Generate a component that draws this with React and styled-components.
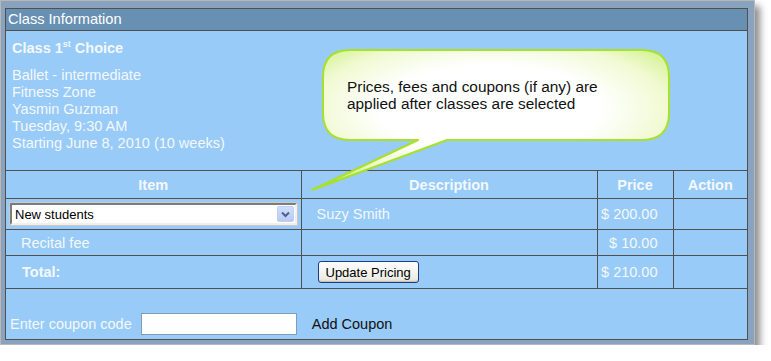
import React from "react";
import styled, { createGlobalStyle } from "styled-components";

const GlobalStyle = createGlobalStyle`
  body {
    margin: 0;
    background: #ffffff;
    font-family: "Liberation Sans", Arial, sans-serif;
  }
`;

const lineColor = "#505050";
const lightText = "#f4f8fc";

const Frame = styled.div`
  width: 755px;
  height: 345px;
  box-sizing: border-box;
  border: 1px solid #b8b8b8;
  background: #89a3be;
  padding: 7px 6px 4px 4px;
  box-shadow: 5px 6px 7px rgba(0, 0, 0, 0.45);
`;

const Panel = styled.div`
  position: relative;
  height: 100%;
  box-sizing: border-box;
  border: 1px solid ${lineColor};
  background: #98cbf8;
  display: flex;
  flex-direction: column;
`;

const Header = styled.div`
  height: 21px;
  line-height: 21px;
  border-bottom: 1px solid ${lineColor};
  background: #6890b2;
  color: #ffffff;
  font-size: 14.6px;
  padding-left: 2px;
`;

const Info = styled.div`
  height: 139px;
  box-sizing: border-box;
  padding: 9px 6px 0;
  color: ${lightText};
  font-size: 14.5px;
  line-height: 17px;
`;

const Title = styled.div`
  font-weight: bold;
  margin-bottom: 10px;

  sup {
    font-size: 9px;
    line-height: 0;
    vertical-align: 6px;
  }
`;

const Table = styled.table`
  width: 100%;
  border-collapse: collapse;
  font-size: 14.5px;
  color: ${lightText};

  th,
  td {
    border: 1px solid ${lineColor};
    padding: 0;
  }
  tr > :first-child {
    border-left: none;
  }
  tr > :last-child {
    border-right: none;
  }
`;

const HeadCell = styled.th`
  height: 27px;
  font-weight: bold;
  text-align: center;
`;

const Cell = styled.td`
  height: ${(p) => p.$h || 26}px;
  text-align: ${(p) => (p.$right ? "right" : "left")};
  padding: 0 ${(p) => (p.$right ? "15px" : "0")} 0 ${(p) => p.$pl || 0}px !important;
  font-weight: ${(p) => (p.$bold ? "bold" : "normal")};
`;

const SelectBox = styled.div`
  margin-left: 4px;
  width: 287px;
  height: 22px;
  box-sizing: border-box;
  outline: 1px solid #c9c9c9;
  display: flex;
  align-items: center;
  background: #ffffff;
  border-top: 2px solid #7c7c7c;
  border-left: 2px solid #7c7c7c;
  border-right: 2px solid #f0f0f0;
  border-bottom: 2px solid #f0f0f0;
`;

const SelectText = styled.span`
  flex: 1;
  padding-left: 3px;
  color: #000000;
  font-size: 13px;
`;

const ArrowButton = styled.span`
  width: 15px;
  height: 14px;
  margin-right: 1px;
  display: flex;
  align-items: center;
  justify-content: center;
  background: linear-gradient(#d1defc, #b7caf5);
  border: 1px solid #bccff7;
  border-radius: 2px;
`;

const Button = styled.button`
  margin-left: 16px;
  height: 22px;
  padding: 0 7px;
  font-family: "Liberation Sans", Arial, sans-serif;
  font-size: 13px;
  color: #000000;
  border: 1px solid #1c3c80;
  border-radius: 3px;
  background: linear-gradient(#ffffff, #ecebe4 85%, #d8d3c4);
  box-shadow: inset 0 -1px 0 #c8c2b2;
`;

const CouponRow = styled.div`
  display: flex;
  align-items: center;
  padding: 24px 0 0 4px;
  font-size: 14.5px;
`;

const CouponLabel = styled.span`
  color: ${lightText};
`;

const CouponInput = styled.input`
  margin-left: 9px;
  width: 156px;
  height: 22px;
  box-sizing: border-box;
  border: 1px solid #7f9db9;
  background: #ffffff;
`;

const AddCoupon = styled.span`
  margin-left: 15px;
  color: #111111;
`;

const Callout = styled.div`
  position: absolute;
  left: 300px;
  top: 32px;
  width: 372px;
  height: 160px;
`;

const CalloutText = styled.div`
  position: absolute;
  left: 41px;
  top: 37px;
  color: #111111;
  font-size: 15.4px;
  line-height: 17px;
`;

const Bubble = () => (
  <svg width="372" height="160" viewBox="0 0 372 160">
    <defs>
      <radialGradient id="bub" cx="0.5" cy="0.42" r="0.62">
        <stop offset="0.5" stopColor="#ffffff" />
        <stop offset="0.8" stopColor="#f0fad2" />
        <stop offset="1" stopColor="#d4f290" />
      </radialGradient>
    </defs>
    <path
      d="M44 9 H336 Q363 9 363 36 V72 Q363 99 336 99 H141 L6 149 L112 99 H44 Q17 99 17 72 V36 Q17 9 44 9 Z"
      fill="url(#bub)"
      stroke="#a8e02a"
      strokeWidth="2"
      strokeLinejoin="round"
    />
  </svg>
);

const Chevron = () => (
  <svg width="9" height="7" viewBox="0 0 9 7">
    <path d="M1 1.5 L4.5 5 L8 1.5" fill="none" stroke="#4d6187" strokeWidth="2" />
  </svg>
);

const App = () => {
  return (
    <>
      <GlobalStyle />
      <Frame>
        <Panel>
          <Header>Class Information</Header>
          <Info>
            <Title>
              Class 1<sup>st</sup> Choice
            </Title>
            <div>Ballet - intermediate</div>
            <div>Fitness Zone</div>
            <div>Yasmin Guzman</div>
            <div>Tuesday, 9:30 AM</div>
            <div>Starting June 8, 2010 (10 weeks)</div>
          </Info>
          <Table>
            <colgroup>
              <col style={{ width: 295 }} />
              <col style={{ width: 296 }} />
              <col style={{ width: 76 }} />
              <col />
            </colgroup>
            <thead>
              <tr>
                <HeadCell>Item</HeadCell>
                <HeadCell>Description</HeadCell>
                <HeadCell>Price</HeadCell>
                <HeadCell>Action</HeadCell>
              </tr>
            </thead>
            <tbody>
              <tr>
                <Cell $h={30}>
                  <SelectBox>
                    <SelectText>New students</SelectText>
                    <ArrowButton>
                      <Chevron />
                    </ArrowButton>
                  </SelectBox>
                </Cell>
                <Cell $h={30} $pl={15}>
                  Suzy Smith
                </Cell>
                <Cell $h={30} $right>
                  $ 200.00
                </Cell>
                <Cell $h={30} />
              </tr>
              <tr>
                <Cell $h={25} $pl={15}>
                  Recital fee
                </Cell>
                <Cell $h={25} />
                <Cell $h={25} $right>
                  $ 10.00
                </Cell>
                <Cell $h={25} />
              </tr>
              <tr>
                <Cell $h={32} $pl={16} $bold>
                  Total:
                </Cell>
                <Cell $h={32}>
                  <Button>Update Pricing</Button>
                </Cell>
                <Cell $h={32} $right>
                  $ 210.00
                </Cell>
                <Cell $h={32} />
              </tr>
            </tbody>
          </Table>
          <CouponRow>
            <CouponLabel>Enter coupon code</CouponLabel>
            <CouponInput />
            <AddCoupon>Add Coupon</AddCoupon>
          </CouponRow>
          <Callout>
            <Bubble />
            <CalloutText>
              Prices, fees and coupons (if any) are
              <br />
              applied after classes are selected
            </CalloutText>
          </Callout>
        </Panel>
      </Frame>
    </>
  );
};

export default App;
